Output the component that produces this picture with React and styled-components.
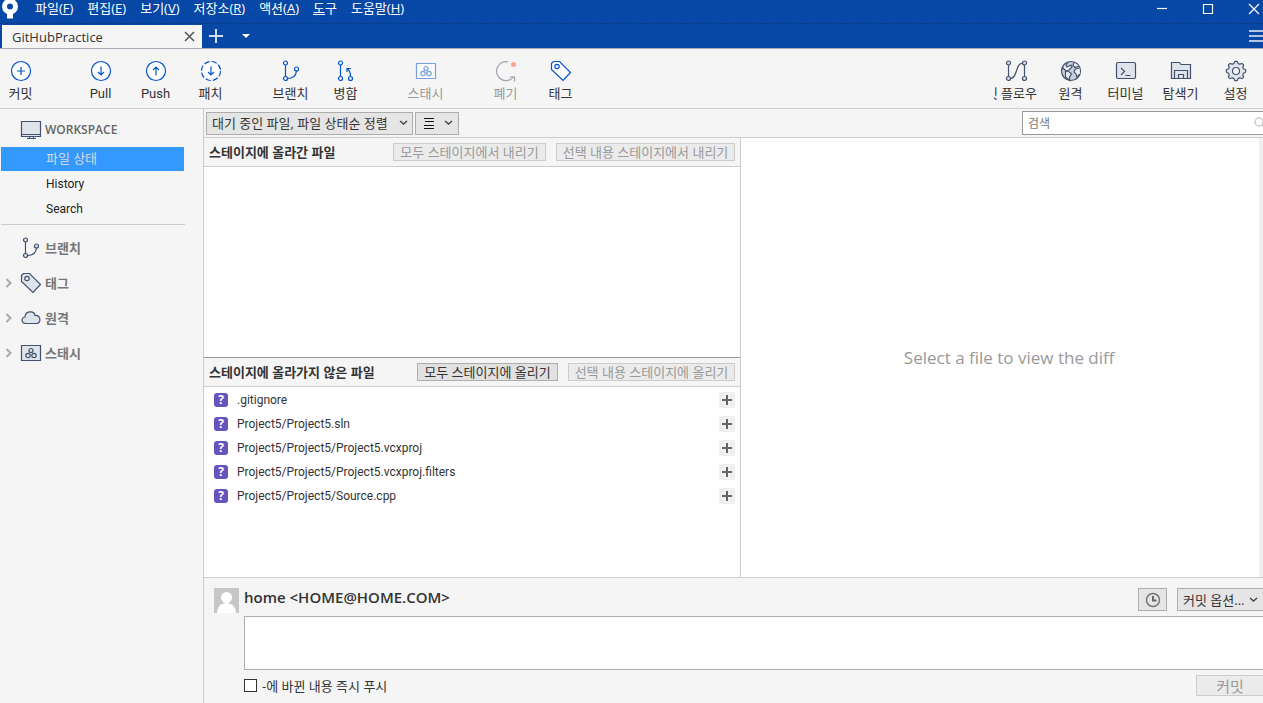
import React from 'react';
import styled, { createGlobalStyle, css } from 'styled-components';

const menus = [
  ['파일', 'F'],
  ['편집', 'E'],
  ['보기', 'V'],
  ['저장소', 'R'],
  ['액션', 'A'],
  ['도구', ''],
  ['도움말', 'H'],
];

const files = [
  '.gitignore',
  'Project5/Project5.sln',
  'Project5/Project5/Project5.vcxproj',
  'Project5/Project5/Project5.vcxproj.filters',
  'Project5/Project5/Source.cpp',
];

/* ---------- icons ---------- */

const Icon = ({ size = 22, children, ...rest }) => (
  <IconSvg width={size} height={size} viewBox="0 0 22 22" aria-hidden="true" {...rest}>
    {children}
  </IconSvg>
);

const CommitIcon = () => (
  <Icon>
    <circle cx="11" cy="11" r="9.5" fill="#fff" />
    <path d="M11 7v8M7 11h8" />
  </Icon>
);

const PullIcon = () => (
  <Icon>
    <circle cx="11" cy="11" r="9.5" fill="#fff" />
    <path d="M11 6.5v8.5M8 12l3 3 3-3" />
  </Icon>
);

const PushIcon = () => (
  <Icon>
    <circle cx="11" cy="11" r="9.5" fill="#fff" />
    <path d="M11 15.5V7M8 10l3-3 3 3" />
  </Icon>
);

const FetchIcon = () => (
  <Icon>
    <circle cx="11" cy="11" r="9.5" fill="#fff" strokeDasharray="5.5 2" />
    <path d="M11 6.5v8.5M8 12l3 3 3-3" />
  </Icon>
);

const BranchIcon = () => (
  <Icon>
    <path d="M5.500 5v12M7.500 18.500c5.500 0 8.500-3 9-7.500" />
    <circle cx="5.500" cy="3" r="2" fill="#dfe3ea" />
    <circle cx="5.500" cy="18.500" r="2" fill="#dfe3ea" />
    <circle cx="16.500" cy="9" r="2" fill="#dfe3ea" />
  </Icon>
);

const MergeIcon = () => (
  <Icon>
    <path d="M5.500 5v12M15.500 16.500c0-3-.5-5.500-3-8M12 12V8.500h4" />
    <circle cx="5.500" cy="3" r="2" />
    <circle cx="5.500" cy="18.500" r="2" />
    <circle cx="15.500" cy="18.500" r="2" />
  </Icon>
);

const StashIcon = () => (
  <Icon>
    <path d="M1.500 3.500h19v15h-19z" fill="#dfe3ea" />
    <circle cx="11" cy="8.500" r="2" />
    <circle cx="8" cy="13.500" r="2.200" />
    <circle cx="14" cy="13.500" r="2.200" />
  </Icon>
);

const DiscardIcon = () => (
  <Icon>
    <path d="M13 1.800A9.500 9.500 0 1 0 18.500 17M14.500 17h5v4.500" />
    <circle cx="18.500" cy="4.500" r="2.500" fill="#ff5630" stroke="none" />
  </Icon>
);

const TagIcon = () => (
  <Icon>
    <path d="M1.500 3.500l2-2h6l11 11-7.500 8L1.500 9.500z" fill="#dfe3ea" />
    <circle cx="7" cy="6.500" r="2.200" fill="#f5f5f5" />
  </Icon>
);

const FlowIcon = () => (
  <Icon>
    <path d="M3.500 5v12M19.500 5v12M5.500 18.500c7 0 5-15.500 12-15.500" />
    <circle cx="3.500" cy="3" r="2" fill="#dfe3ea" />
    <circle cx="3.500" cy="18.500" r="2" fill="#dfe3ea" />
    <circle cx="19.500" cy="3" r="2" fill="#dfe3ea" />
    <circle cx="19.500" cy="18.500" r="2" fill="#dfe3ea" />
  </Icon>
);

const GlobeIcon = () => (
  <Icon>
    <circle cx="11" cy="11" r="9.500" fill="#c9cfda" />
    <path
      d="M8 2l-2 3 1 2 4-2 1 2-3 3-3 1-3-3-1.500 2M5.500 11l4 1 2 2-2 3v3.500L5.500 17zM14 2.500l-1 3 2 2 4-1.500M19.500 8l-4 1-1.500 3 2 2 1 3 3-3"
      fill="#eef0f3"
    />
  </Icon>
);

const TerminalIcon = () => (
  <Icon>
    <rect x="1.500" y="2.500" width="19" height="16" rx="1.500" fill="#dfe3ea" />
    <path d="M6 8l3.500 3.500L6 15M10.500 15.500h5" />
  </Icon>
);

const ExplorerIcon = () => (
  <Icon>
    <path d="M1.500 18.500v-16h8l1.500 2h9.500v14z" fill="#dfe3ea" />
    <path d="M4.500 18.500v-8h13v8M8.500 18.500v-4h5v4" />
  </Icon>
);

// eight rounded teeth around the hub
const gearPath = Array.from({ length: 96 }, (_, i) => {
  const angle = (i / 96) * Math.PI * 2;
  const r = 8.7 + Math.tanh(2.5 * Math.cos(8 * angle));
  const x = (11 + r * Math.cos(angle)).toFixed(2);
  const y = (11 + r * Math.sin(angle)).toFixed(2);
  return `${i ? 'L' : 'M'}${x} ${y}`;
}).join('') + 'z';

const GearIcon = () => (
  <Icon>
    <path d={gearPath} fill="#dfe3ea" />
    <circle cx="11" cy="11" r="3.500" fill="#f5f5f5" />
  </Icon>
);

const MonitorIcon = () => (
  <Icon>
    <path d="M1.500 2.500h19v15h-19zM1.500 15.500h19M9.500 17.500v2M13.500 17.500v2M7 19.500h9" fill="#dfe3ea" />
  </Icon>
);

const CloudIcon = () => (
  <Icon>
    <path
      d="M6 16.500c-5 0-5-6-1-6.500 0-6 9-7 10-1.500 6-.5 6.500 8 1.500 8z"
      fill="#dfe3ea"
    />
  </Icon>
);

const Chevron = () => (
  <svg width="9" height="6" viewBox="0 0 9 6" aria-hidden="true">
    <path d="M1 1l3.500 3L8 1" fill="none" stroke="#444" strokeWidth="1.400" />
  </svg>
);

const ExpandIcon = () => (
  <svg width="8" height="10" viewBox="0 0 8 10" aria-hidden="true">
    <path d="M1.500 1l4 4-4 4" fill="none" stroke="#aaa" strokeWidth="2" />
  </svg>
);

/* ---------- sections ---------- */

const Tool = ({ icon, label, tone, disabled, clipped }) => (
  <ToolButton type="button" $tone={tone} disabled={disabled}>
    {icon}
    <ToolLabel $clipped={clipped}>
      <span>{label}</span>
    </ToolLabel>
  </ToolButton>
);

const TitleBar = () => (
  <TitleRow>
    <Logo width="18" height="19" viewBox="0 0 18 19" aria-hidden="true">
      <circle cx="9" cy="6.500" r="5.500" fill="none" stroke="#fff" strokeWidth="5" />
      <path d="M6 12h6v6.500H6z" fill="#fff" />
    </Logo>
    <MenuNav aria-label="메뉴">
      {menus.map(([label, key]) => (
        <MenuButton type="button" key={label}>
          {key ? <>{label}(<u>{key}</u>)</> : <><u>도</u>구</>}
        </MenuButton>
      ))}
    </MenuNav>
    <WindowButtons>
      <WindowButton type="button" aria-label="최소화">
        <svg width="12" height="12" viewBox="0 0 12 12"><path d="M1 5.500h10" /></svg>
      </WindowButton>
      <WindowButton type="button" aria-label="최대화">
        <svg width="12" height="12" viewBox="0 0 12 12"><path d="M1.500 1.500h9v9h-9z" /></svg>
      </WindowButton>
      <WindowButton type="button" aria-label="닫기">
        <svg width="12" height="12" viewBox="0 0 12 12"><path d="M1 1l10 10M11 1L1 11" /></svg>
      </WindowButton>
    </WindowButtons>
  </TitleRow>
);

const TabBar = () => (
  <TabRow>
    <Tab>
      <TabName type="button">GitHubPractice</TabName>
      <TabClose type="button" aria-label="탭 닫기">
        <svg width="11" height="11" viewBox="0 0 11 11">
          <path d="M1 1l9 9M10 1l-9 9" stroke="#555" strokeWidth="1.500" />
        </svg>
      </TabClose>
    </Tab>
    <TabAction type="button" aria-label="새 탭">
      <svg width="14" height="14" viewBox="0 0 14 14">
        <path d="M7 0v14M0 7h14" stroke="#d5def0" strokeWidth="2" />
      </svg>
    </TabAction>
    <TabAction type="button" aria-label="탭 목록">
      <svg width="8" height="4" viewBox="0 0 8 4"><path d="M0 0h8L4 4z" fill="#fff" /></svg>
    </TabAction>
    <Burger type="button" aria-label="사이드 메뉴">
      <svg width="14" height="12" viewBox="0 0 14 12">
        <path d="M0 1h14M0 6h14M0 11h14" stroke="#b4c5e4" strokeWidth="2" />
      </svg>
    </Burger>
  </TabRow>
);

const Toolbar = () => (
  <ToolRow>
    <ToolGroup>
      <Tool icon={<CommitIcon />} label="커밋" />
    </ToolGroup>
    <ToolGroup>
      <Tool icon={<PullIcon />} label="Pull" />
      <Tool icon={<PushIcon />} label="Push" />
      <Tool icon={<FetchIcon />} label="패치" />
    </ToolGroup>
    <ToolGroup>
      <Tool icon={<BranchIcon />} label="브랜치" />
      <Tool icon={<MergeIcon />} label="병합" />
    </ToolGroup>
    <ToolGroup>
      <Tool icon={<StashIcon />} label="스태시" disabled />
    </ToolGroup>
    <ToolGroup>
      <Tool icon={<DiscardIcon />} label="폐기" tone="gray" disabled />
      <Tool icon={<TagIcon />} label="태그" />
    </ToolGroup>
    <ToolGroup $end>
      <Tool icon={<FlowIcon />} label="깃 플로우" tone="gray" clipped />
      <Tool icon={<GlobeIcon />} label="원격" tone="gray" />
      <Tool icon={<TerminalIcon />} label="터미널" tone="gray" />
      <Tool icon={<ExplorerIcon />} label="탐색기" tone="gray" />
      <Tool icon={<GearIcon />} label="설정" tone="gray" />
    </ToolGroup>
  </ToolRow>
);

const SideBar = () => (
  <Side>
    <SideHead>
      <MonitorIcon />
      WORKSPACE
    </SideHead>
    <SideList>
      <li><SideLink href="#status" $active>파일 상태</SideLink></li>
      <li><SideLink href="#history">History</SideLink></li>
      <li><SideLink href="#search">Search</SideLink></li>
    </SideList>
    <SideSection type="button"><Expand /><BranchIcon />브랜치</SideSection>
    <SideSection type="button"><Expand><ExpandIcon /></Expand><TagIcon />태그</SideSection>
    <SideSection type="button"><Expand><ExpandIcon /></Expand><CloudIcon />원격</SideSection>
    <SideSection type="button"><Expand><ExpandIcon /></Expand><StashIcon />스태시</SideSection>
  </Side>
);

const FilterBar = () => (
  <FilterRow>
    <SelectBox>
      <Select aria-label="파일 정렬">
        <option>대기 중인 파일, 파일 상태순 정렬</option>
      </Select>
      <Chevron />
    </SelectBox>
    <ViewButton type="button" aria-label="보기 방식">
      <svg width="10" height="11" viewBox="0 0 10 11">
        <path d="M0 .5h10M1 3.500h9M0 7.500h10M0 10.500h10" stroke="#111" />
      </svg>
      <Chevron />
    </ViewButton>
    <SearchBox>
      <SearchInput type="search" placeholder="검색" aria-label="검색" />
      <svg width="11" height="12" viewBox="0 0 11 12" aria-hidden="true">
        <circle cx="5" cy="5" r="4" fill="none" stroke="#ccc" strokeWidth="1.500" />
        <path d="M8 8l3 3" stroke="#ccc" strokeWidth="1.500" />
      </svg>
    </SearchBox>
  </FilterRow>
);

const Files = () => (
  <FilesColumn>
    <Pane>
      <PaneHead>
        <PaneTitle>스테이지에 올라간 파일</PaneTitle>
        <SmallButton type="button" disabled>모두 스테이지에서 내리기</SmallButton>
        <SmallButton type="button" disabled>선택 내용 스테이지에서 내리기</SmallButton>
      </PaneHead>
    </Pane>
    <Pane $divided>
      <PaneHead>
        <PaneTitle>스테이지에 올라가지 않은 파일</PaneTitle>
        <SmallButton type="button">모두 스테이지에 올리기</SmallButton>
        <SmallButton type="button" disabled>선택 내용 스테이지에 올리기</SmallButton>
      </PaneHead>
      <FileList>
        {files.map((file) => (
          <FileRow key={file}>
            <Badge>?</Badge>
            <FileName>{file}</FileName>
            <StageButton type="button" aria-label={`${file} 올리기`}>
              <svg width="10" height="10" viewBox="0 0 10 10">
                <path d="M5 0v10M0 5h10" stroke="#666" strokeWidth="2" />
              </svg>
            </StageButton>
          </FileRow>
        ))}
      </FileList>
    </Pane>
  </FilesColumn>
);

const CommitPanel = () => (
  <CommitForm onSubmit={(e) => e.preventDefault()}>
    <Avatar width="25" height="25" viewBox="0 0 25 25" aria-hidden="true">
      <path d="M0 0h25v25H0z" fill="#c6c6c6" />
      <circle cx="12.500" cy="9.500" r="5.500" fill="#fff" />
      <path d="M3 25c0-6 4-10 9.500-10S22 19 22 25z" fill="#fff" />
    </Avatar>
    <CommitBody>
      <CommitHead>
        <Author>home &lt;HOME@HOME.COM&gt;</Author>
        <ClockButton type="button" aria-label="이전 커밋 메시지">
          <svg width="16" height="16" viewBox="0 0 16 16">
            <circle cx="8" cy="8" r="6.500" fill="none" stroke="#777" strokeWidth="1.500" />
            <path d="M8 4v4.500h3.500" fill="none" stroke="#666" strokeWidth="2" />
          </svg>
        </ClockButton>
        <SelectBox>
          <Select aria-label="커밋 옵션" $open>
            <option>커밋 옵션...</option>
          </Select>
          <Chevron />
        </SelectBox>
      </CommitHead>
      <Message aria-label="커밋 메시지" />
      <CommitFoot>
        <PushLabel>
          <CheckBox type="checkbox" />
          -에 바뀐 내용 즉시 푸시
        </PushLabel>
        <CommitButton type="submit" disabled>커밋</CommitButton>
      </CommitFoot>
    </CommitBody>
  </CommitForm>
);

const App = () => (
  <>
    <GlobalStyle />
    <Window>
      <TitleBar />
      <TabBar />
      <Toolbar />
      <Content>
        <SideBar />
        <Main>
          <FilterBar />
          <Split>
            <Files />
            <Diff>Select a file to view the diff</Diff>
          </Split>
          <CommitPanel />
        </Main>
      </Content>
    </Window>
  </>
);

/* ---------- styles ---------- */

const GlobalStyle = createGlobalStyle`
  * {
    box-sizing: border-box;
  }
  body {
    margin: 0;
    overflow: hidden;
    background: #f5f5f5;
    color: #333;
    font: 13px/18px "Open Sans", "Noto Sans CJK KR", sans-serif;
  }
  button, input, select, textarea {
    margin: 0;
    font: inherit;
    color: inherit;
    border-radius: 0;
  }
  button {
    padding: 0;
    border: 0;
    background: none;
    white-space: nowrap;
  }
  svg {
    flex: none;
  }
`;

const narrowText = css`
  font-family: Roboto, "Noto Sans CJK KR", sans-serif;
  font-size: 12px;
`;

const IconSvg = styled.svg`
  fill: none;
  stroke: currentColor;
  stroke-width: 1.2;
`;

const Window = styled.div`
  display: flex;
  flex-direction: column;
  height: 100vh;
`;

const TitleRow = styled.header`
  display: flex;
  flex: none;
  height: 24px;
  padding-left: 1px;
  background: #0747a6;
  border-bottom: 1px dashed #0a3a80;
  color: #fff;
`;

const Logo = styled.svg`
  flex: none;
`;

const MenuNav = styled.nav`
  display: flex;
  align-items: flex-start;
  gap: 14px;
  padding-left: 16px;
`;

const MenuButton = styled.button`
  font-size: 13px;
  line-height: 16px;
`;

const WindowButtons = styled.div`
  display: flex;
  gap: 34px;
  margin-left: auto;
  padding-right: 3px;
`;

const WindowButton = styled.button`
  display: flex;
  align-items: center;
  height: 18px;

  svg {
    fill: none;
    stroke: #fff;
    stroke-width: 1.2;
  }
`;

const TabRow = styled.div`
  display: flex;
  flex: none;
  align-items: center;
  height: 25px;
  padding-left: 2px;
  background: #0747a6;
  border-bottom: 1px solid #a8adb8;
`;

const Tab = styled.div`
  display: flex;
  align-items: center;
  justify-content: space-between;
  align-self: flex-end;
  width: 200px;
  height: 23px;
  padding: 0 7px 0 10px;
  background: #f5f5f5;
`;

const TabName = styled.button`
  font-size: 13px;
`;

const TabClose = styled.button`
  display: flex;
`;

const TabAction = styled.button`
  display: flex;
  justify-content: center;
  width: 28px;

  & + & {
    width: 32px;
  }
`;

const Burger = styled.button`
  display: flex;
  margin-left: auto;
`;

const ToolRow = styled.div`
  display: flex;
  flex: none;
  gap: 25px;
  height: 60px;
  margin-left: -7px;
  border-bottom: 1px solid #ccc;
`;

const ToolGroup = styled.div`
  display: flex;
  ${({ $end }) => $end && 'margin-left: auto;'}
`;

const ToolButton = styled.button`
  display: flex;
  flex-direction: column;
  align-items: center;
  gap: 3px;
  width: 55px;
  padding-top: 11px;
  font-family: Roboto, "Noto Sans CJK KR", sans-serif;

  svg {
    color: ${({ $tone }) => ($tone === 'gray' ? '#42526e' : '#0052cc')};
  }
  ${({ $tone }) => !$tone && css`
    svg [fill='#dfe3ea'] {
      fill: #fff;
    }
  `}
  &:disabled {
    color: #999;
    svg {
      opacity: 0.5;
    }
  }
`;

const ToolLabel = styled.span`
  display: flex;
  justify-content: center;
  ${({ $clipped }) => $clipped && css`
    justify-content: flex-end;
    width: 43px;
    overflow: hidden;
  `}
`;

const Content = styled.div`
  display: flex;
  flex: 1;
  min-height: 0;
`;

const Side = styled.nav`
  flex: none;
  width: 204px;
  padding: 10px 18px 0 1px;
  border-right: 1px solid #ccc;
  color: #666;
`;

const SideHead = styled.div`
  display: flex;
  align-items: center;
  gap: 3px;
  height: 22px;
  padding-left: 19px;
  font-size: 12px;
  font-weight: 600;

  svg {
    color: #42526e;
  }
`;

const SideList = styled.ul`
  margin: 6px 0 5px;
  padding: 0 0 2px;
  border-bottom: 1px solid #ccc;
  list-style: none;
`;

const SideLink = styled.a`
  display: block;
  margin-bottom: 1px;
  padding-left: 45px;
  ${narrowText}
  line-height: 24px;
  color: #222;
  text-decoration: none;
  ${({ $active }) => $active && css`
    margin-right: 1px;
    background: #3399ff;
    color: #d5d8de;
    font-size: 13px;
  `}
`;

const SideSection = styled.button`
  display: flex;
  align-items: center;
  gap: 3px;
  width: 100%;
  height: 35px;
  color: #777;
  font-weight: 600;

  > svg {
    color: #42526e;
  }
`;

const Expand = styled.span`
  display: flex;
  width: 16px;
  padding-left: 4px;
`;

const Main = styled.main`
  display: flex;
  flex: 1;
  flex-direction: column;
  min-width: 0;
`;

const FilterRow = styled.div`
  display: flex;
  flex: none;
  align-items: center;
  gap: 2px;
  height: 29px;
  padding-left: 2px;
  border-bottom: 1px solid #ccc;
`;

const SelectBox = styled.div`
  display: grid;
  align-items: center;

  > * {
    grid-area: 1 / 1;
  }
  svg {
    justify-self: end;
    margin-right: 5px;
    pointer-events: none;
  }
`;

const Select = styled.select`
  appearance: none;
  height: 23px;
  padding: 0 24px 0 5px;
  border: 1px solid #adadad;
  background: #e5e5e5;
  ${({ $open }) => $open && css`
    padding: 0 18px 0 5px;
    border-right: 0;
  `}
`;

const ViewButton = styled.button`
  display: flex;
  align-items: center;
  justify-content: space-between;
  width: 44px;
  height: 23px;
  padding: 0 5px 0 8px;
  border: 1px solid #adadad;
  background: #e5e5e5;
`;

const SearchBox = styled.label`
  display: grid;
  align-items: center;
  width: 241px;
  margin-left: auto;

  > * {
    grid-area: 1 / 1;
  }
  svg {
    justify-self: end;
    margin-right: -2px;
  }
`;

const SearchInput = styled.input`
  width: 100%;
  height: 24px;
  padding: 0 16px 0 5px;
  border: 1px solid #999;
  border-right: 0;
  background: #fff;
  font-size: 12px;

  &::placeholder {
    color: #777;
  }
`;

const Split = styled.div`
  display: grid;
  grid-template-columns: minmax(0, 103fr) minmax(0, 100fr);
  flex: 1;
  min-height: 0;
`;

const FilesColumn = styled.div`
  display: flex;
  flex-direction: column;
  border-right: 1px solid #ccc;
`;

const Pane = styled.section`
  flex: 1 1 0;
  min-height: 0;
  background: #fff;
  ${({ $divided }) => $divided && 'border-top: 1px solid #999;'}
`;

const PaneHead = styled.div`
  display: flex;
  align-items: center;
  gap: 10px;
  height: 29px;
  padding: 0 5px;
  background: #f5f5f5;
  border-bottom: 1px solid #ccc;
`;

const PaneTitle = styled.h2`
  margin: 0 auto 0 0;
  font-size: 13px;
  font-weight: 600;
`;

const SmallButton = styled.button`
  height: 18px;
  padding: 0 6px;
  border: 1px solid #adadad;
  background: #e1e1e1;
  line-height: 16px;

  &:disabled {
    border-color: #ccc;
    background: #ebebeb;
    color: #999;
  }
`;

const FileList = styled.ul`
  margin: 0;
  padding: 1px 5px 0 10px;
  list-style: none;
`;

const FileRow = styled.li`
  display: flex;
  align-items: center;
  height: 24px;
`;

const Badge = styled.span`
  width: 14px;
  border-radius: 3px;
  background: #6554c0;
  color: #fff;
  font-size: 12px;
  font-weight: 700;
  line-height: 14px;
  text-align: center;
`;

const FileName = styled.span`
  flex: 1;
  padding-left: 9px;
  ${narrowText}
`;

const StageButton = styled.button`
  display: flex;
  align-items: center;
  justify-content: center;
  width: 16px;
  height: 16px;
  border-radius: 2px;
  background: #f0f0f0;
`;

const Diff = styled.section`
  display: flex;
  align-items: center;
  justify-content: center;
  padding-left: 18px;
  border-right: 4px solid #f0f0f0;
  background: #fff;
  color: #999;
  font-size: 17px;
`;

const CommitForm = styled.form`
  display: flex;
  flex: none;
  gap: 5px;
  padding: 10px 0 7px 10px;
  border-top: 1px solid #ccc;
`;

const Avatar = styled.svg`
  flex: none;
`;

const CommitBody = styled.div`
  flex: 1;
  min-width: 0;
`;

const CommitHead = styled.div`
  display: flex;
  align-items: flex-start;
  gap: 10px;
  height: 23px;
`;

const Author = styled.strong`
  margin-right: auto;
  font-size: 15px;
  font-weight: 600;
`;

const ClockButton = styled.button`
  display: flex;
  align-items: center;
  justify-content: center;
  width: 29px;
  height: 23px;
  border: 1px solid #adadad;
  background: #e5e5e5;
`;

const Message = styled.textarea`
  display: block;
  width: 100%;
  height: 54px;
  margin: 5px 0;
  border: 1px solid #adadad;
  border-right: 0;
  background: #fff;
  resize: none;
`;

const CommitFoot = styled.div`
  display: flex;
  align-items: center;
  justify-content: space-between;
`;

const PushLabel = styled.label`
  display: flex;
  align-items: center;
  gap: 5px;
`;

const CheckBox = styled.input`
  appearance: none;
  width: 13px;
  height: 13px;
  border: 1px solid #333;
  background: #fff;

  &:checked {
    background: #333;
  }
`;

const CommitButton = styled.button`
  width: 67px;
  height: 21px;
  border: 1px solid #ccc;
  border-right: 0;
  background: #ebebeb;
  font-size: 15px;
  line-height: 18px;

  &:disabled {
    color: #999;
  }
`;

export default App;
